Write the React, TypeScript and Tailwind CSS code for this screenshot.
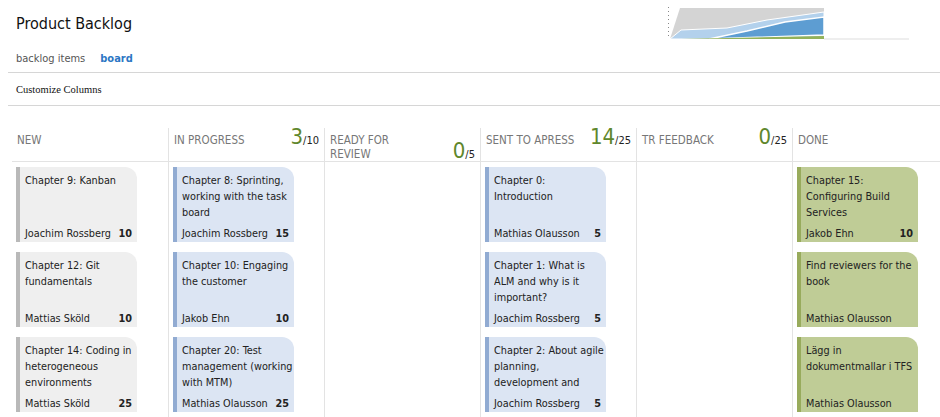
import React from "react";

type Card = { title: string; owner: string; effort?: number };
type Column = {
  name: string;
  count?: number;
  limit?: number;
  tone: "gray" | "blue" | "green";
  cards: Card[];
};

const columns: Column[] = [
  {
    name: "NEW",
    tone: "gray",
    cards: [
      { title: "Chapter 9: Kanban", owner: "Joachim Rossberg", effort: 10 },
      { title: "Chapter 12: Git fundamentals", owner: "Mattias Sköld", effort: 10 },
      { title: "Chapter 14: Coding in heterogeneous environments", owner: "Mattias Sköld", effort: 25 },
    ],
  },
  {
    name: "IN PROGRESS",
    count: 3,
    limit: 10,
    tone: "blue",
    cards: [
      { title: "Chapter 8: Sprinting, working with the task board", owner: "Joachim Rossberg", effort: 15 },
      { title: "Chapter 10: Engaging the customer", owner: "Jakob Ehn", effort: 10 },
      { title: "Chapter 20: Test management (working with MTM)", owner: "Mathias Olausson", effort: 25 },
    ],
  },
  { name: "READY FOR REVIEW", count: 0, limit: 5, tone: "blue", cards: [] },
  {
    name: "SENT TO APRESS",
    count: 14,
    limit: 25,
    tone: "blue",
    cards: [
      { title: "Chapter 0: Introduction", owner: "Mathias Olausson", effort: 5 },
      { title: "Chapter 1: What is ALM and why is it important?", owner: "Joachim Rossberg", effort: 5 },
      { title: "Chapter 2: About agile planning, development and", owner: "Joachim Rossberg", effort: 5 },
    ],
  },
  { name: "TR FEEDBACK", count: 0, limit: 25, tone: "blue", cards: [] },
  {
    name: "DONE",
    tone: "green",
    cards: [
      { title: "Chapter 15: Configuring Build Services", owner: "Jakob Ehn", effort: 10 },
      { title: "Find reviewers for the book", owner: "Mathias Olausson" },
      { title: "Lägg in dokumentmallar i TFS", owner: "Mathias Olausson" },
    ],
  },
];

const toneClass = {
  gray: "bg-[#efefef] border-[#b9b9b9]",
  blue: "bg-[#dce5f3] border-[#91abd2]",
  green: "bg-[#bfcc96] border-[#98ab5c]",
};

const Burndown = () => (
  <svg width="245" height="36" viewBox="0 0 245 36" className="block">
    <line x1="1.5" y1="2" x2="1.5" y2="34" stroke="#888" strokeDasharray="1 3" />
    <path d="M3,34 L13,3 L157,3 L157,34 Z" fill="#d4d4d4" />
    <path d="M3,34 L14,25 L60,23 L100,15 L157,7 L157,34 Z" fill="#b3d1ec" stroke="#fff" strokeWidth="1" />
    <path d="M42,34 L80,26 L118,17 L157,12 L157,30 Z" fill="#5d9dd2" stroke="#fff" strokeWidth="1.5" />
    <path d="M14,34 L157,31 L157,34 Z" fill="#93b25a" />
    <line x1="157" y1="34" x2="242" y2="34" stroke="#ddd" />
  </svg>
);

const BoardCard = ({ card, tone }: { card: Card; tone: Column["tone"] }) => (
  <div
    className={`flex h-[75px] w-[121px] flex-col justify-between rounded-tr-[12px] border-l-4 pt-[6px] pr-[1px] pb-0 pl-[5px] text-[10.8px] leading-[16px] text-[#222] ${toneClass[tone]}`}
  >
    <div className="max-h-[48px] overflow-hidden">{card.title}</div>
    <div className="flex justify-between pr-[4px]">
      <span>{card.owner}</span>
      {card.effort !== undefined ? <span className="font-bold">{card.effort}</span> : null}
    </div>
  </div>
);

export default function App() {
  return (
    <div className="h-[417px] w-[940px] overflow-hidden bg-white font-['DejaVu_Sans_Condensed','DejaVu_Sans',sans-serif] text-[#222]">
      <div className="flex h-[49px] items-start justify-between">
        <h1 className="pt-[14px] pl-[16px] text-[16px] leading-[20px] text-[#111]">Product Backlog</h1>
        <div className="mt-[5px] mr-[28px]">
          <Burndown />
        </div>
      </div>
      <div className="flex gap-[15px] pl-[16px] text-[11px] leading-[20px]">
        <span className="text-[#555]">backlog items</span>
        <span className="font-bold text-[#2c77c4]">board</span>
      </div>
      <div className="mt-[3px] ml-[8px] border-t border-[#d6d6d6]" />
      <div className="flex h-[32px] items-center pt-[2px] pl-[16px] font-['Liberation_Serif',serif] text-[10.5px] text-[#111]">
        Customize Columns
      </div>
      <div className="ml-[8px] border-t border-[#d6d6d6]" />

      <div className="mt-[22px] ml-[12px] flex">
        {columns.map((col, i) => (
          <div
            key={col.name}
            className={`flex h-[300px] w-[156px] shrink-0 flex-col ${i > 0 ? "border-l border-[#e3e3e3]" : ""}`}
          >
            <div className="h-[34px] border-b border-[#e3e3e3] pt-[5px] pr-[5px] pl-[5px]">
              <div className="flex items-baseline-last justify-between">
                <span className="max-w-[92px] text-[11.5px] leading-[14px] text-[#777]">{col.name}</span>
                {col.count !== undefined ? (
                  <span className="-mt-[5px] text-[11px] leading-[14px] text-[#222]">
                    <span className="text-[22px] text-[#5f872c]">{col.count}</span>
                    <span>/{col.limit}</span>
                  </span>
                ) : null}
              </div>
            </div>
            <div className="flex flex-col gap-[10px] pt-[5px] pl-[4px]">
              {col.cards.map((card) => (
                <BoardCard key={card.title} card={card} tone={col.tone} />
              ))}
            </div>
          </div>
        ))}
      </div>
    </div>
  );
}
